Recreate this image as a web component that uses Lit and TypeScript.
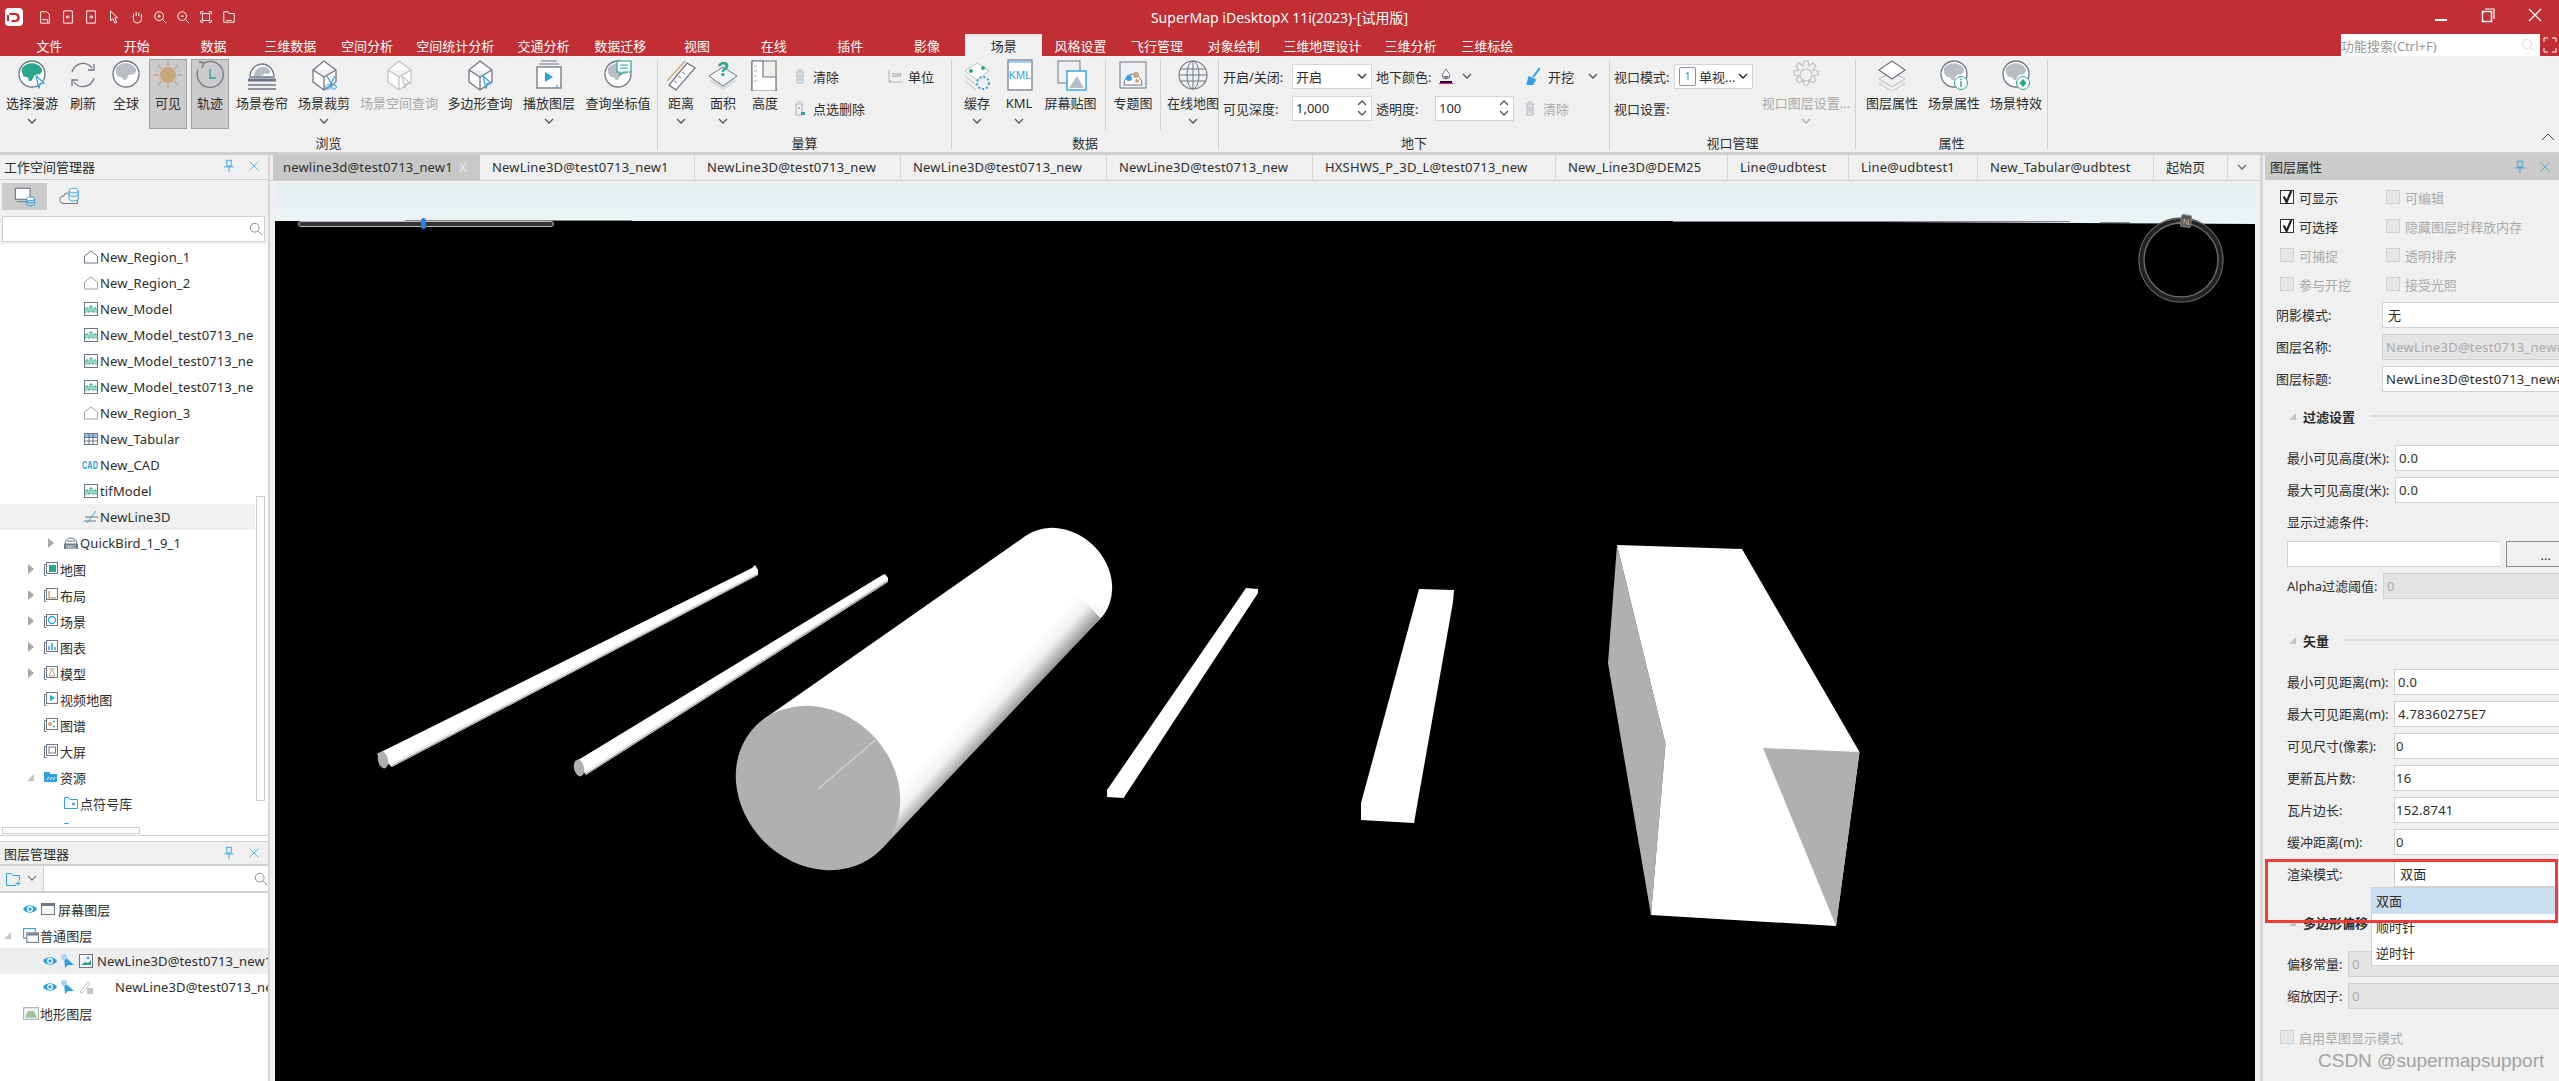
import { LitElement, css, html, svg } from "lit";
import { customElement } from "lit/decorators.js";

const SL = "#6d7787";
const TEAL = "#2aa58e";
const BLUE = "#2ea1e0";
const TAN = "#c9a77d";
const GR = "#b9bec6";

const ico = (body: unknown, s = 32, vb = 32) =>
  html`<svg width=${s} height=${s} viewBox="0 0 ${vb} ${vb}" fill="none">${body}</svg>`;

const globe = (c = GR, o = SL) => svg`
  <circle cx="16" cy="15" r="13" fill="#fff" stroke=${o} stroke-width="1.3"/>
  <path d="M6 9c4-5 11-6 16-3 4 2 5 6 3 8-2 3-6 0-7 3s-3 6-5 3c-1-3-5-1-6-4-1-2-2-5-1-7z" fill=${c}/>`;

const cursor = (x: number, y: number, c = BLUE) =>
  svg`<path d="M${x} ${y}l8 7-4 .5 -1 5z" fill="#fff" stroke=${c} stroke-width="1.2"/>`;

const cube = (c = SL) => svg`
  <path d="M16 2L28 11V23L16 31 5 23V11z M5 11L16 18 28 11 M16 18V31" stroke=${c} stroke-width="1.3" fill="#fff"/>`;

const I: Record<string, unknown> = {
  roam: ico(svg`${globe(TEAL)}<path d="M14 16v6" stroke=${TEAL} stroke-width="3"/>${cursor(20, 17)}`),
  refresh: ico(svg`
    <path d="M5 13C7 6 14 3 20 5c2 1 4 2 5 4" stroke=${SL} stroke-width="1.3"/>
    <path d="M27 5v6h-6" stroke=${SL} stroke-width="1.3"/>
    <path d="M27 19c-2 7-9 10-15 8-2-1-4-2-5-4" stroke=${SL} stroke-width="1.3"/>
    <path d="M5 27v-6h6" stroke=${SL} stroke-width="1.3"/>`),
  earth: ico(globe()),
  sun: ico(svg`<circle cx="16" cy="16" r="8" fill=${TAN}/>
    <path d="M16 2v5M16 25v5M2 16h5M25 16h5M6 6l3.5 3.5M22.5 22.5L26 26M26 6l-3.5 3.5M9.5 22.5L6 26" stroke=${TAN} stroke-width="1.6"/>`),
  track: ico(svg`<path d="M10 4A13 13 0 1 1 4 11" stroke=${SL} stroke-width="1.3"/><path d="M5 3l5 1-2 5" stroke=${SL} stroke-width="1.3"/>
    <path d="M16 10v9h6" stroke=${TEAL} stroke-width="1.4"/>`),
  curtain: ico(svg`<path d="M4 18a12 13 0 0 1 24 0z" fill="#fff" stroke=${SL} stroke-width="1.3"/>
    <path d="M8 17c0-6 5-10 11-9 4 1 6 4 5 6-2 2-4 0-6 1-1 2-3 2-5 2z" fill=${GR}/>
    <path d="M2 21h28" stroke=${SL} stroke-width="3"/><path d="M2 26h28M2 30h28" stroke=${SL} stroke-width="1.6"/>`),
  clip: ico(svg`${cube()}<path d="M19 17l5 9M27 17l-5 9" stroke=${BLUE} stroke-width="1.2"/><circle cx="20" cy="28" r="2.3" stroke=${BLUE}/><circle cx="26" cy="28" r="2.3" stroke=${BLUE}/>`),
  cubeq: ico(svg`${cube("#c4c4c4")}${cursor(19, 17, "#c4c4c4")}`),
  polyq: ico(svg`${cube()}${cursor(19, 17)}`),
  play: ico(svg`<path d="M8 2h16M6 5h20" stroke=${SL}/><rect x="4" y="8" width="24" height="21" stroke=${SL} stroke-width="1.3" fill="#fff"/>
    <path d="M12 13l8 5-8 5z" fill=${BLUE}/><path d="M24 26v3" stroke=${SL}/>`),
  coord: ico(svg`${globe()}<path d="M15 2h14v11h-8l-3 3v-3h-3z" fill="#fff" stroke=${TEAL} stroke-width="1.2"/><path d="M18 6h8M18 9h8" stroke=${TEAL}/>`),
  dist: ico(svg`<path d="M22 4l8 5L11 31l-7-5z" fill="#fff" stroke=${SL} stroke-width="1.3"/><path d="M2 22L20 2" stroke=${TAN} stroke-width="1.2"/><path d="M9 22l3 2M13 17l3 2M17 13l3 2" stroke=${SL}/>`),
  area: ico(svg`<path d="M16 12l14 10-14 9L2 22z" fill="#d8dbe0"/><path d="M2 17l14-9 14 9-14 10z" fill="#f4f4f4" stroke=${SL}/>
    <text x="16" y="17" text-anchor="middle" font-family="Liberation Sans" font-size="20" font-weight="700" fill=${TEAL}>?</text>`),
  height: ico(svg`<path d="M3 2h24v30M3 2v30h24" stroke=${SL} stroke-width="1.2"/>
    <path d="M3 2h11v16h13v14H3z" fill="#fff" stroke=${SL} stroke-width="1.2"/><path d="M5 7h3M5 12h3M5 17h3M5 22h3M27 4v26" stroke=${TAN}/>`),
  trash: ico(svg`<path d="M4 4h8M6 2h4M5 4v11h6V4M7 6v7M9 6v7" stroke="#aab0b8"/>`, 16, 16),
  trash2: ico(svg`<path d="M3 4h8M5 2h4M4 4v11h6V4" stroke="#aab0b8"/><circle cx="7" cy="8" r="1" fill=${TAN}/><rect x="9" y="12" width="4" height="3" fill=${TEAL}/>`, 16, 16),
  unit: ico(svg`<path d="M2 2v12h13M2 14l2-2" stroke="#aab0b8"/><text x="5" y="9" font-size="6" font-family="Liberation Sans" fill="#888">DM</text>`, 16, 16),
  cache: ico(svg`<path d="M4 12L16 4l12 8-12 9z" fill="#fff" stroke=${GR}/><path d="M4 17l11 9M4 22l11 9" stroke=${GR}/>
    <circle cx="10" cy="12" r="2" fill=${TEAL}/><circle cx="22" cy="9" r="2" fill=${TEAL}/><circle cx="22" cy="24" r="6" stroke=${BLUE} stroke-dasharray="2 2" stroke-width="2"/>`),
  kml: ico(svg`<rect x="5" y="1" width="24" height="30" fill="#fff" stroke=${SL} stroke-width="1.2"/><path d="M6 3h22" stroke=${BLUE}/>
    <text x="17" y="20" text-anchor="middle" font-family="Liberation Sans" font-size="11" fill=${BLUE}>KML</text>`),
  tex: ico(svg`<rect x="3" y="2" width="22" height="22" fill="#eef0f2" stroke=${SL}/><rect x="12" y="12" width="19" height="19" fill="#fff" stroke=${BLUE} stroke-width="1.4"/><path d="M14 29l8-12 7 12z" fill=${GR}/>`),
  theme: ico(svg`<rect x="3" y="3" width="26" height="26" fill="#eef0f2" stroke=${SL}/><path d="M7 26a9 11 0 1 1 18 0z" fill="#fff" stroke=${SL}/><circle cx="12" cy="19" r="3" fill=${BLUE}/><circle cx="19" cy="16" r="3" fill=${TAN}/><circle cx="20" cy="22" r="2" fill=${TAN}/>`),
  online: ico(svg`<circle cx="16" cy="16" r="14" stroke=${SL} stroke-width="1.1"/><ellipse cx="16" cy="16" rx="6" ry="14" stroke=${SL}/><path d="M16 2v28M3 10h26M3 22h26M2 16h28" stroke=${SL}/>`),
  fill: ico(svg`<path d="M8 1l4 6a4 4 0 1 1-8 0z" fill="#fff" stroke=${SL}/><path d="M5 8h6l-3 3z" fill=${SL}/><rect x="2" y="13" width="12" height="2" fill="#111"/><path d="M1 15.5h14" stroke="#f0c"/>`, 16, 16),
  dig: ico(svg`<path d="M14 1L8 9" stroke=${BLUE} stroke-width="1.6"/><path d="M2 16l2-8 7 3-3 5z" fill=${BLUE}/>`, 18, 16),
  gear: ico(svg`<circle cx="16" cy="16" r="6" stroke="#c0c0c0" stroke-width="1.2"/><path d="M14 2h4l1 5 4-3 3 3-3 4 5 1v4l-5 1 3 4-3 3-4-3-1 5h-4l-1-5-4 3-3-3 3-4-5-1v-4l5-1-3-4 3-3 4 3z" stroke="#c0c0c0" stroke-width="1.2"/>`),
  layers: ico(svg`<path d="M16 18L3 25l13 7 13-7z" stroke="#c4c8cf"/><path d="M16 13L3 20l13 8 13-8z" fill="#f0f0f0" stroke="#b2b7c0"/><path d="M16 2L3 11l13 9 13-9z" fill="#fff" stroke=${SL} stroke-width="1.2"/>`),
  ginfo: ico(svg`${globe()}<circle cx="23" cy="24" r="6.5" fill="#fff" stroke=${TEAL}/><path d="M23 22v6M23 19.5v1.5" stroke=${TEAL} stroke-width="1.4"/>`),
  gfx: ico(svg`${globe()}<circle cx="23" cy="24" r="6.5" fill="#fff" stroke=${TEAL}/><path d="M23 20l3.5 4-3.5 4-3.5-4z" fill=${TEAL}/>`),
  region: ico(svg`<path d="M1.5 14V7L8 2l6.5 5v7z" stroke=${SL}/>`, 16, 16),
  region2: ico(svg`<path d="M1.5 14V7L8 2l6.5 5v7z" stroke="#9aa1ac"/>`, 16, 16),
  model: ico(svg`<rect x="1.5" y="1.5" width="13" height="13" stroke=${SL}/><path d="M3 12V7h2v4h2V5h2v6h2V7h2v5" stroke=${TEAL}/>`, 16, 16),
  table: ico(svg`<rect x="1.5" y="2.5" width="13" height="11" stroke=${SL}/><path d="M2 3h12v3H2z" fill="#8dc2e8"/><path d="M2 6.5h12M2 10h12M6 3v10M10 3v10" stroke=${SL}/>`, 16, 16),
  line3d: ico(svg`<path d="M2 8h13M1 12h12" stroke=${SL}/><path d="M4 14L13 2" stroke=${BLUE}/>`, 16, 16),
  img: ico(svg`<path d="M2 9a6 6 0 0 1 12 0z" stroke=${SL}/><path d="M4 6h8" stroke=${SL}/><rect x="1" y="9" width="14" height="5" fill=${SL}/><text x="8" y="13.5" text-anchor="middle" font-size="5" font-family="Liberation Sans" fill="#fff">IMG</text>`, 16, 16),
  map: ico(svg`<path d="M3.5 14.5h-2v-11h2" stroke=${SL}/><rect x="3.5" y="1.5" width="11" height="11" stroke=${SL}/><rect x="6" y="4" width="7" height="7" fill=${TEAL}/>`, 16, 16),
  layout: ico(svg`<path d="M3.5 14.5h-2v-11h2" stroke=${SL}/><rect x="3.5" y="1.5" width="11" height="11" stroke=${SL}/><path d="M6 4v7h7" stroke=${TAN} stroke-width="1.5"/>`, 16, 16),
  scene: ico(svg`<path d="M3.5 14.5h-2v-11h2" stroke=${SL}/><rect x="3.5" y="1.5" width="11" height="11" stroke=${SL}/><circle cx="9" cy="7" r="3.5" stroke=${BLUE} stroke-width="1.3"/>`, 16, 16),
  chart: ico(svg`<path d="M3.5 14.5h-2v-11h2" stroke=${SL}/><rect x="3.5" y="1.5" width="11" height="11" stroke=${SL}/><path d="M6 11V7M9 11V4M12 11V8" stroke=${BLUE} stroke-width="1.5"/>`, 16, 16),
  mdl: ico(svg`<path d="M3.5 14.5h-2v-11h2" stroke=${SL}/><rect x="3.5" y="1.5" width="11" height="11" stroke=${SL}/><path d="M6 4h6M9 4l-3 7h6z" stroke=${TAN}/>`, 16, 16),
  video: ico(svg`<path d="M3.5 14.5h-2v-11h2" stroke=${SL}/><rect x="3.5" y="1.5" width="11" height="11" stroke=${SL}/><path d="M7 4l5 3-5 3z" fill=${BLUE}/>`, 16, 16),
  graph: ico(svg`<path d="M3.5 14.5h-2v-11h2" stroke=${SL}/><rect x="3.5" y="1.5" width="11" height="11" stroke=${SL}/><circle cx="7" cy="7" r="2" fill=${TAN}/><circle cx="11" cy="4.5" r="1" fill=${TEAL}/><circle cx="11" cy="9.5" r="1" fill=${TEAL}/>`, 16, 16),
  screen: ico(svg`<path d="M3.5 14.5h-2v-11h2" stroke=${SL}/><rect x="3.5" y="1.5" width="11" height="11" stroke=${SL}/><rect x="6" y="4" width="6.5" height="6" stroke=${SL}/>`, 16, 16),
  res: ico(svg`<path d="M1 13V3h5l1.5 2H14v8z" fill=${BLUE}/><path d="M4 11l2-3M7 11l2-3M10 11l2-3" stroke="#fff"/>`, 16, 16),
  sym: ico(svg`<path d="M1.5 13.5v-11h4l1.5 2h7.5v9z" stroke=${BLUE}/><circle cx="10.5" cy="9" r="1.5" fill=${BLUE}/>`, 16, 16),
  eye: ico(svg`<path d="M1 8c3-5 11-5 14 0-3 5-11 5-14 0z" fill=${BLUE}/><circle cx="8" cy="8" r="3" fill="#fff"/><circle cx="8" cy="8" r="1.7" fill=${BLUE}/>`, 16, 16),
  arrow: ico(svg`<path d="M4 3l10 9H8l-3 3z" fill=${BLUE}/><circle cx="4" cy="4" r="3" fill="#a6d5ef"/>`, 16, 16),
  scr: ico(svg`<rect x="1.5" y="2.5" width="13" height="11" fill="#f6f6f6" stroke=${SL}/><path d="M2 3h12v2H2z" fill=${SL}/>`, 16, 16),
  multi: ico(svg`<rect x="1.5" y="1.5" width="11" height="9" fill="#fff" stroke=${BLUE}/><rect x="4.5" y="5.5" width="11" height="9" fill="#fff" stroke=${SL}/><path d="M5 6h10v2H5z" fill=${SL}/>`, 17, 16),
  pic: ico(svg`<rect x="1.5" y="1.5" width="13" height="13" fill="#f4f4f4" stroke=${SL}/><circle cx="10" cy="5" r="1.3" fill=${BLUE}/><path d="M3 12l4-3 3 1 3-3v5z" fill=${TEAL}/>`, 16, 16),
  lock: ico(svg`<path d="M2 13L10 3l2 2-8 9z" stroke="#c4c4c4"/><rect x="9" y="9" width="6" height="6" fill="#c4c4c4"/>`, 16, 16),
  terrain: ico(svg`<rect x="1.5" y="2.5" width="14" height="11" fill="#f4f4f4" stroke="#aab0b8"/><path d="M3 12c2-7 4-7 5-6 2-2 4 0 6 6z" fill="#9fc59a"/>`, 17, 16),
  pin: ico(svg`<path d="M4.5 1.5h7M5.5 2v6h5V2M2.5 9h11M8 9v6" stroke=${BLUE}/>`, 14, 16),
  x: ico(svg`<path d="M2 2l12 12M14 2L2 14" stroke=${BLUE}/>`, 12, 16),
  search: ico(svg`<circle cx="6.5" cy="6.5" r="5" stroke="#7f7f7f"/><path d="M10 10l5 5" stroke="#7f7f7f"/>`, 14, 16),
  pc: ico(svg`<rect x="1.5" y="2.5" width="16" height="12" fill="#fff" stroke=${SL} stroke-width="1.2"/><path d="M3 17h12" stroke=${SL}/><ellipse cx="18" cy="14" rx="4.5" ry="2" fill="#fff" stroke=${BLUE}/><path d="M13.5 14v6c0 2 9 2 9 0v-6M13.5 17c0 2 9 2 9 0" stroke=${BLUE}/>`, 22, 24),
  cloud: ico(svg`<path d="M5 19a4 4 0 0 1 0-8c1-3 4-4 6-3M20 15v4H5" stroke=${SL} stroke-width="1.1"/><ellipse cx="16" cy="5" rx="5" ry="2.5" fill="#fff" stroke=${BLUE}/><path d="M11 5v9c0 3 10 3 10 0V5M11 9c0 3 10 3 10 0" stroke=${BLUE}/>`, 22, 24),
  addf: ico(svg`<path d="M11 14.5H1.5v-12h5l1.5 2h6.5v5" stroke=${BLUE}/><path d="M13 10v5M10.5 12.5h5" stroke=${BLUE}/>`, 16, 16),
};

const white = (d: string) => ico(svg`<path d=${d} stroke="#fff" stroke-width="1.1"/>`, 14, 16);
const QUICK = [
  "M3 2h7l3 3v10H3zM5 11h6v4",
  "M3 1h10v14H3zM10 8H6M8 6L6 8l2 2",
  "M3 1h10v14H3zM6 8h4M8 6l2 2-2 2",
  "M4 1v11l3-2 2 5 2-1-2-5h3z",
  "M4 8V4M7 7V2M10 7V3M13 8V5M4 8L3 7M4 7v4c0 5 9 5 9 0V5",
  "M7 2a5 5 0 1 0 0 10 5 5 0 0 0 0-10zM11 11l4 4M5 7h4M7 5v4",
  "M7 2a5 5 0 1 0 0 10 5 5 0 0 0 0-10zM11 11l4 4M5 7h4",
  "M2 5V2h3M11 2h3v3M14 11v3h-3M5 14H2v-3M4 4h8v8H4z",
  "M2 2h5l1 2h6v10H2zM5 12h6",
];

const TOP_TABS = ["开始", "数据", "三维数据", "空间分析", "空间统计分析", "交通分析", "数据迁移", "视图", "在线", "插件", "影像", "场景", "风格设置", "飞行管理", "对象绘制", "三维地理设计", "三维分析", "三维标绘"];

type Btn = { t: string; w: number; i: string; ml?: number; more?: boolean; on?: boolean; off?: boolean };
const chev = (c = "#555") => html`<svg width="10" height="7" viewBox="0 0 10 7" fill="none"><path d="M1 1l4 4 4-4" stroke=${c} stroke-width="1.3"/></svg>`;
const btn = (b: Btn) => html`
  <div class="btn ${b.on ? "on" : ""} ${b.off ? "off" : ""}" style="width:${b.w}px;margin-left:${b.ml ?? 0}px">
    <div class="bi">${I[b.i]}</div>
    <div class="bl">${b.t}</div>
    ${b.more ? html`<div class="bc">${chev(b.off ? "#aaa" : "#555")}</div>` : ""}
  </div>`;
const spin = html`<span class="spin"><svg width="10" height="18" viewBox="0 0 10 18" fill="none"><path d="M1 6l4-4 4 4M1 12l4 4 4-4" stroke="#555" stroke-width="1.3"/></svg></span>`;

const BROWSE: Btn[] = [
  { t: "选择漫游", w: 52, i: "roam", ml: 6, more: true },
  { t: "刷新", w: 50, i: "refresh" },
  { t: "全球", w: 36, i: "earth" },
  { t: "可见", w: 38, i: "sun", ml: 5, on: true },
  { t: "轨迹", w: 38, i: "track", ml: 4, on: true },
  { t: "场景卷帘", w: 66, i: "curtain" },
  { t: "场景裁剪", w: 58, i: "clip", more: true },
  { t: "场景空间查询", w: 92, i: "cubeq", off: true },
  { t: "多边形查询", w: 70, i: "polyq" },
  { t: "播放图层", w: 68, i: "play", more: true },
  { t: "查询坐标值", w: 70, i: "coord" },
];
const MEASURE: Btn[] = [
  { t: "距离", w: 44, i: "dist", ml: 1, more: true },
  { t: "面积", w: 40, i: "area", more: true },
  { t: "高度", w: 44, i: "height" },
];

type Row = { t: string; i: string; lv: number; tri?: "r" | "d"; hl?: boolean };
const TREE: Row[] = [
  { t: "New_Region_1", i: "region", lv: 3 },
  { t: "New_Region_2", i: "region2", lv: 3 },
  { t: "New_Model", i: "model", lv: 3 },
  { t: "New_Model_test0713_ne", i: "model", lv: 3 },
  { t: "New_Model_test0713_ne", i: "model", lv: 3 },
  { t: "New_Model_test0713_ne", i: "model", lv: 3 },
  { t: "New_Region_3", i: "region2", lv: 3 },
  { t: "New_Tabular", i: "table", lv: 3 },
  { t: "New_CAD", i: "cad", lv: 3 },
  { t: "tifModel", i: "model", lv: 3 },
  { t: "NewLine3D", i: "line3d", lv: 3, hl: true },
  { t: "QuickBird_1_9_1", i: "img", lv: 2, tri: "r" },
  { t: "地图", i: "map", lv: 1, tri: "r" },
  { t: "布局", i: "layout", lv: 1, tri: "r" },
  { t: "场景", i: "scene", lv: 1, tri: "r" },
  { t: "图表", i: "chart", lv: 1, tri: "r" },
  { t: "模型", i: "mdl", lv: 1, tri: "r" },
  { t: "视频地图", i: "video", lv: 1 },
  { t: "图谱", i: "graph", lv: 1 },
  { t: "大屏", i: "screen", lv: 1 },
  { t: "资源", i: "res", lv: 1, tri: "d" },
  { t: "点符号库", i: "sym", lv: 2 },
  { t: "线型符号库", i: "sym", lv: 2 },
];

const DOC_TABS = [
  ["NewLine3D@test0713_new1", 215],
  ["NewLine3D@test0713_new", 206],
  ["NewLine3D@test0713_new", 206],
  ["NewLine3D@test0713_new", 206],
  ["HXSHWS_P_3D_L@test0713_new", 243],
  ["New_Line3D@DEM25", 172],
  ["Line@udbtest", 121],
  ["Line@udbtest1", 129],
  ["New_Tabular@udbtest", 176],
  ["起始页", 74],
] as const;

const CHECKS = [
  ["可显示", true, "可编辑"],
  ["可选择", true, "隐藏图层时释放内存"],
  ["可捕捉", false, "透明排序"],
  ["参与开挖", false, "接受光照"],
] as const;

const check = (on: boolean, t: string) => html`
  <span class="chk ${on ? "ck" : ""}">
    <i>${on ? html`<svg width="13" height="13" viewBox="0 0 14 14" fill="none"><path d="M3 6l3 6 5-12" stroke="#222" stroke-width="2.4"/></svg>` : ""}</i>${t}
  </span>`;

const field = (label: string, val: string, left: number, base: number, off = false, pad = 3) => html`
  <div class="prow" style="padding-left:${base}px">
    <span class="pl" style="width:${left - base}px">${label}</span>
    <span class="fd ${off ? "dis" : ""}" style="padding-left:${pad}px">${val}</span>
  </div>`;

const head = (t: string, cls: string) => html`
  <div class="sect ${cls}"><span class="tri-d"></span><b>${t}</b><span class="rule"></span></div>`;

@customElement("app-root")
export class AppRoot extends LitElement {
  private row(r: Row) {
    return html`
      <div class="tr ${r.hl ? "hl" : ""}" style="padding-left:${r.lv * 20 + 3}px">
        <span class="slot">${r.tri === "r" ? html`<span class="tri-r"></span>` : r.tri === "d" ? html`<span class="tri-d"></span>` : ""}</span>
        <span class="ti">${r.i === "cad" ? html`<span class="cad">CAD</span>` : I[r.i]}</span>
        <span>${r.t}</span>
      </div>`;
  }

  private leftPanel() {
    return html`
      <aside class="left">
        <div class="ph"><span>工作空间管理器</span><span class="grow"></span>${I.pin}<span class="px">${I.x}</span></div>
        <div class="wtool"><span class="wb sel">${I.pc}</span><span class="wb">${I.cloud}</span></div>
        <div class="sbox">${I.search}</div>
        <div class="tree">
          ${TREE.map((r) => this.row(r))}
          <div class="vthumb"></div>
        </div>
        <div class="hbar"><div></div></div>
        <div class="ph lm"><span>图层管理器</span><span class="grow"></span>${I.pin}<span class="px">${I.x}</span></div>
        <div class="ltool">${I.addf}<span class="lc">${chev("#888")}</span><span class="linput">${I.search}</span></div>
        <div class="layers">
          <div class="lr" style="padding-left:22px">${I.eye}<span class="g2">${I.scr}</span><span class="g2">屏幕图层</span></div>
          <div class="lr" style="padding-left:4px"><span class="tri-d"></span><span class="g5">${I.multi}</span><span class="g1">普通图层</span></div>
          <div class="lr hl" style="padding-left:42px">${I.eye}<span class="g2">${I.arrow}</span><span class="g2">${I.pic}</span><span class="g3">NewLine3D@test0713_new1</span></div>
          <div class="lr" style="padding-left:42px">${I.eye}<span class="g2">${I.arrow}</span><span class="g2">${I.lock}</span><span class="g20">NewLine3D@test0713_new</span></div>
          <div class="lr" style="padding-left:22px"><span>${I.terrain}</span><span class="g1">地形图层</span></div>
        </div>
      </aside>`;
  }

  private scene() {
    return html`
      <svg class="scene" viewBox="275 183 1980 898" preserveAspectRatio="none">
        <defs>
          <linearGradient id="sky" x1="0" y1="0" x2="0" y2="1"><stop offset="0" stop-color="#e3eef1"/><stop offset="1" stop-color="#f0f7f8"/></linearGradient>
          <linearGradient id="cyl" gradientUnits="userSpaceOnUse" x1="860" y1="830" x2="884" y2="852"><stop offset="0" stop-color="#fff"/><stop offset=".5" stop-color="#f2f2f2"/><stop offset="1" stop-color="#9a9a9a"/></linearGradient>
        </defs>
        <rect x="275" y="183" width="1980" height="60" fill="url(#sky)"/>
        <polygon points="275,221 1670,221 2255,224 2255,1081 275,1081" fill="#000"/>
        <path d="M405 220.5H632M1673 221.5H2070M2100 222.5H2130" stroke="#888"/>
        <rect x="298.5" y="221.5" width="255" height="5" rx="2.5" fill="#333" stroke="#bbb"/>
        <rect x="421" y="218" width="5" height="11" rx="2.5" fill="#2a7fe0"/>
        <circle cx="2181" cy="260" r="42" stroke="#5c5c5c" stroke-width="1.5" fill="none"/>
        <circle cx="2181" cy="260" r="39.5" stroke="#222" stroke-width="3.5" fill="none"/>
        <circle cx="2181" cy="260" r="37" stroke="#6a6a6a" stroke-width="1.5" fill="none"/>
        <rect x="2181" y="215" width="10" height="12" rx="2" fill="#555" stroke="#888" transform="rotate(8 2186 221)"/>
        <text x="2186" y="225" text-anchor="middle" font-size="9" font-family="Liberation Sans" fill="#bbb">N</text>

        <polygon points="377,754 752,568 755,565 758,570 758,575 392,767" fill="#fff"/>
        <path d="M392 766L758 574.5" stroke="#a0a0a0" stroke-width="1.2"/>
        <path d="M390.5 764.5L757 573.5" stroke="#dcdcdc" stroke-width="1"/>
        <ellipse cx="383" cy="760" rx="5" ry="8.5" transform="rotate(-12 383 760)" fill="#b0b0b0"/>
        <polygon points="576.5,761 882.5,575 885,574 888,578 888,582 586,775" fill="#fff"/>
        <path d="M586 774L888 581" stroke="#a0a0a0" stroke-width="1.2"/>
        <path d="M584.5 772.5L887 580" stroke="#dcdcdc" stroke-width="1"/>
        <ellipse cx="579" cy="768" rx="5" ry="8.5" transform="rotate(-12 579 768)" fill="#b0b0b0"/>

        <ellipse cx="1060" cy="580" rx="56" ry="48" transform="rotate(45 1060 580)" fill="url(#cyl)"/>
        <polygon points="764,719 1025.5,536 1100.6,618.5 882,848.5" fill="url(#cyl)"/>
        <ellipse cx="818" cy="788" rx="88" ry="76" transform="rotate(45 818 788)" fill="#b0b0b0"/>
        <path d="M818 789L875.5 740" stroke="#e6e6e6"/>

        <polygon points="1246,588 1258,589 1258,593 1123.6,798 1107,797 1107,790" fill="#fff"/>
        <polygon points="1419,589 1454,590 1453,602 1414,823 1361,820 1361,803" fill="#fff"/>
        <polygon points="1617,545 1608,663 1651,915 1665.5,744" fill="#b0b0b0"/>
        <polygon points="1617,545 1742,549 1859.5,752 1836,926 1651,915 1665.5,744" fill="#fff"/>
        <polygon points="1763,748 1859.5,752 1836,926" fill="#b0b0b0"/>
      </svg>`;
  }

  private rightPanel() {
    return html`
      <aside class="right">
        <div class="ph act"><span>图层属性</span><span class="grow"></span>${I.pin}<span class="px">${I.x}</span></div>
        <div class="checks">
          ${CHECKS.map(([a, on, b]) => html`<div class="crow"><span class="c1">${check(on, a)}</span>${check(false, b)}</div>`)}
        </div>
        ${field("阴影模式:", "无", 117, 11, false, 5)}
        ${field("图层名称:", "NewLine3D@test0713_new#", 117, 11, true)}
        ${field("图层标题:", "NewLine3D@test0713_new#", 117, 11)}
        ${head("过滤设置", "s1")}
        ${field("最小可见高度(米):", "0.0", 130, 22)}
        ${field("最大可见高度(米):", "0.0", 130, 22)}
        <div class="prow" style="padding-left:22px"><span class="pl">显示过滤条件:</span></div>
        <div class="prow" style="padding-left:22px"><span class="fd f213"></span><span class="dots">...</span></div>
        ${field("Alpha过滤阈值:", "0", 118, 22, true)}
        ${head("矢量", "s2")}
        ${field("最小可见距离(m):", "0.0", 129, 22)}
        ${field("最大可见距离(m):", "4.78360275E7", 129, 22)}
        ${field("可见尺寸(像素):", "0", 129, 22, false, 1)}
        ${field("更新瓦片数:", "16", 129, 22, false, 1)}
        ${field("瓦片边长:", "152.8741", 129, 22, false, 1)}
        ${field("缓冲距离(m):", "0", 129, 22, false, 1)}
        ${field("渲染模式:", "双面", 129, 22, false, 5)}
        ${head("多边形偏移", "s3")}
        ${field("偏移常量:", "0", 83, 22, true)}
        ${field("缩放因子:", "0", 83, 22, true)}
        <div class="sk">${check(false, "启用草图显示模式")}</div>
        <div class="menu"><div class="sel">双面</div><div>顺时针</div><div>逆时针</div></div>
        <div class="redbox"></div>
        <div class="mark">CSDN @supermapsupport</div>
      </aside>`;
  }

  private ribbon() {
    return html`
      <section class="ribbon">
        <div class="group" style="width:658px">
          <div class="gb">${BROWSE.map(btn)}</div><div class="gl">浏览</div>
        </div>
        <div class="group" style="width:294px">
          <div class="gb">
            ${MEASURE.map(btn)}
            <div class="scol" style="width:95px;margin-left:5px">
              <div class="sr">${I.trash}<span>清除</span></div>
              <div class="sr">${I.trash2}<span>点选删除</span></div>
            </div>
            <div class="scol" style="width:57px"><div class="sr">${I.unit}<span>单位</span></div></div>
          </div>
          <div class="gl">量算</div>
        </div>
        <div class="group" style="width:267px">
          <div class="gb">
            ${btn({ t: "缓存", w: 46, i: "cache", ml: 2, more: true })}
            ${btn({ t: "KML", w: 38, i: "kml", more: true })}
            ${btn({ t: "屏幕贴图", w: 65, i: "tex" })}
            <span class="vs"></span>
            ${btn({ t: "专题图", w: 50, i: "theme" })}
            <span class="vs"></span>
            ${btn({ t: "在线地图", w: 60, i: "online", more: true })}
          </div>
          <div class="gl">数据</div>
        </div>
        <div class="group" style="width:391px">
          <div class="gb col ug">
            <div class="ur">
              <span class="ul" style="width:69px">开启/关闭:</span>
              <span class="ctl" style="width:80px">开启<span class="grow"></span>${chev("#333")}</span>
              <span class="ul" style="width:56px;margin-left:4px">地下颜色:</span>
              <span class="clr">${I.fill}<span class="cm">${chev()}</span></span>
              <span class="sr nar">${I.dig}<span>开挖</span><span class="cm">${chev()}</span></span>
            </div>
            <div class="ur">
              <span class="ul" style="width:69px">可见深度:</span>
              <span class="ctl" style="width:80px">1,000<span class="grow"></span>${spin}</span>
              <span class="ul" style="width:59px;margin-left:4px">透明度:</span>
              <span class="ctl" style="width:79px">100<span class="grow"></span>${spin}</span>
              <span class="sr off" style="margin-left:8px">${I.trash}<span>清除</span></span>
            </div>
          </div>
          <div class="gl">地下</div>
        </div>
        <div class="group" style="width:246px">
          <div class="gb">
            <div class="col ug" style="width:145px">
              <div class="ur">
                <span class="ul" style="width:60px">视口模式:</span>
                <span class="ctl tight" style="width:79px"><span class="one">1</span>单视...<span class="grow"></span>${chev("#222")}</span>
              </div>
              <div class="ur"><span class="ul">视口设置:</span></div>
            </div>
            ${btn({ t: "视口图层设置...", w: 98, i: "gear", off: true, more: true })}
          </div>
          <div class="gl">视口管理</div>
        </div>
        <div class="group" style="width:192px">
          <div class="gb" style="padding-left:5px">
            ${btn({ t: "图层属性", w: 62, i: "layers" })}
            ${btn({ t: "场景属性", w: 62, i: "ginfo" })}
            ${btn({ t: "场景特效", w: 62, i: "gfx" })}
          </div>
          <div class="gl">属性</div>
        </div>
        <span class="grow"></span>
        <span class="collapse"><svg width="14" height="8" viewBox="0 0 14 8" fill="none"><path d="M1 7l6-6 6 6" stroke="#444"/></svg></span>
      </section>`;
  }

  render() {
    return html`
      <header class="title">
        <div class="t1">
          <div class="quick">
            <svg class="logo" width="18" height="18" viewBox="0 0 18 18"><rect width="18" height="18" rx="4" fill="#fff"/><path d="M4 5h7c5 0 5 9 0 9H6l1-2h3c3 0 3-5 0-5H5z" fill="#d0282e"/><rect x="2" y="7" width="2" height="6" fill="#d0282e"/></svg>
            ${QUICK.map((d) => html`<span class="qi">${white(d)}</span>`)}
          </div>
          <div class="caption">SuperMap iDesktopX 11i(2023)-[试用版]</div>
          <div class="win">
            <svg width="14" height="14" viewBox="0 0 14 14" fill="none"><path d="M1 12h12" stroke="#fff" stroke-width="2"/></svg>
            <svg width="16" height="16" viewBox="0 0 16 16" fill="none"><rect x="2.5" y="4.5" width="9" height="10" stroke="#fff" stroke-width="1.5"/><path d="M5 2h9v10" stroke="#fff" stroke-width="1.2"/></svg>
            <svg width="14" height="14" viewBox="0 0 14 14" fill="none"><path d="M1 1l12 12M13 1L1 13" stroke="#fff" stroke-width="1.3"/></svg>
          </div>
        </div>
        <div class="t2">
          <span class="tab first">文件</span>
          ${TOP_TABS.map((t) => html`<span class="tab ${t === "场景" ? "act" : ""}">${t}</span>`)}
          <span class="grow"></span>
          <span class="find">功能搜索(Ctrl+F)<span class="grow"></span>
            <svg width="14" height="14" viewBox="0 0 14 14" fill="none"><circle cx="6" cy="6" r="4.5" stroke="#ddd"/><path d="M9 9l4 4" stroke="#ddd"/></svg>
          </span>
          <span class="full"><svg width="14" height="16" viewBox="0 0 14 16" fill="none"><path d="M1 5V1h4M9 1h4v4M13 11v4H9M5 15H1v-4" stroke="#fff"/></svg></span>
        </div>
      </header>
      ${this.ribbon()}
      <main class="main">
        ${this.leftPanel()}
        <section class="center">
          <div class="dtabs">
            <span class="dt cur">newline3d@test0713_new1<em>X</em></span>
            ${DOC_TABS.map(([t, w]) => html`<span class="dt" style="width:${w}px">${t}</span>`)}
            <span class="dmore">${chev("#666")}</span>
          </div>
          ${this.scene()}
        </section>
        ${this.rightPanel()}
      </main>`;
  }

  static styles = css`
    :host {
      display: block;
      width: 2559px;
      height: 1081px;
      overflow: hidden;
      background: #f0f0f0;
      color: #2d2d2d;
      font-family: "Noto Sans", "Noto Sans CJK SC", sans-serif;
      font-size: 13px;
    }
    svg { display: block; flex: none; }
    .grow { flex: 1; }

    .title { height: 56px; background: #c12e33; color: #fff; }
    .t1 { height: 34px; display: grid; grid-template-columns: 1fr auto 1fr; align-items: center; }
    .quick { display: flex; align-items: center; padding-left: 5px; }
    .logo { margin-right: 10px; }
    .qi { width: 23px; display: flex; justify-content: center; }
    .caption { font-size: 14px; margin-bottom: 1px; }
    .win { display: flex; align-items: center; justify-content: flex-end; gap: 32px; padding: 0 17px 4px 0; }
    .t2 { height: 22px; display: flex; }
    .tab { min-width: 76.7px; padding: 0 11px; box-sizing: border-box; text-align: center; line-height: 24px; white-space: nowrap; }
    .tab.first { width: 98.5px; }
    .tab.act { background: #f0f0f0; color: #2d2d2d; border-top: 2px solid #e6e6e6; line-height: 20px; }
    .find { width: 199px; background: #fff; color: #999; display: flex; align-items: center; padding-right: 5px; box-sizing: border-box; }
    .full { width: 19px; display: flex; align-items: center; justify-content: center; }

    .ribbon { height: 99px; box-sizing: border-box; display: flex; border-bottom: 3px solid #cfcfcf; background: #f0f0f0; }
    .group { flex: none; box-sizing: border-box; margin: 4px 0 2px; border-right: 1px solid #cfcfcf; display: flex; flex-direction: column; }
    .gb { height: 74px; display: flex; }
    .gb.col, .col { flex-direction: column; display: flex; }
    .gl { height: 16px; line-height: 18px; text-align: center; }
    .btn { flex: none; height: 74px; display: flex; flex-direction: column; align-items: center; box-sizing: border-box; white-space: nowrap; }
    .btn.on { height: 70px; margin-top: -1px; background: #cbcbcb; border: 1px solid #a3a3a3; }
    .btn.off { color: #aaa; }
    .bi { height: 30px; display: flex; align-items: center; }
    .bl { height: 26px; line-height: 26px; }
    .bc { height: 10px; display: flex; align-items: center; }
    .vs { width: 1px; height: 70px; background: #cfcfcf; margin: 0 2px; flex: none; }
    .scol { display: flex; flex-direction: column; flex: none; }
    .sr { height: 32px; display: flex; align-items: center; gap: 5px; white-space: nowrap; }
    .sr.off { color: #aaa; }
    .ug { padding-left: 4px; }
    .ur { height: 32px; display: flex; align-items: center; white-space: nowrap; }
    .ul { display: block; flex: none; }
    .ctl { flex: none; height: 25px; box-sizing: border-box; background: #fff; border: 1px solid #d4d4d4; display: flex; align-items: center; padding: 0 4px 0 3px; }
    .ctl.tight { padding-left: 4px; }
    .one { width: 17px; height: 19px; border: 1px solid #8894a5; box-sizing: border-box; border-radius: 2px; color: #4a7ab0; font-size: 10px; text-align: center; line-height: 17px; margin-right: 3px; }
    .clr { width: 92px; display: flex; align-items: center; padding-left: 6px; box-sizing: border-box; }
    .cm { margin-left: 8px; }
    .sr.nar { gap: 6px; }
    .spin { display: block; }
    .collapse { align-self: flex-end; padding: 0 4px 11px 0; }

    .main { height: 926px; display: flex; }
    .left { width: 270px; flex: none; box-sizing: border-box; border-right: 2px solid #d6d6d6; background: #fff; display: flex; flex-direction: column; position: relative; }
    .ph { height: 25px; box-sizing: border-box; flex: none; display: flex; align-items: center; background: #f0f0f0; border-bottom: 1px solid #d0d0d0; padding: 0 8px 2px 4px; }
    .ph.lm { margin-top: 5px; height: 25px; border-top: 1px solid #d0d0d0; border-bottom: 2px solid #d0d0d0; padding-bottom: 0; }
    .px { margin-left: 12px; }
    .wtool { height: 33px; background: #f0f0f0; display: flex; padding: 3px 0 3px 2px; box-sizing: border-box; flex: none; }
    .wb { width: 45px; display: flex; align-items: center; justify-content: center; }
    .wb.sel { background: #cbcbcb; }
    .sbox { height: 31px; flex: none; background: #f0f0f0; padding: 3px 3px 2px 2px; box-sizing: border-box; display: flex; justify-content: flex-end; align-items: center; position: relative; }
    .sbox::before { content: ""; position: absolute; left: 2px; right: 3px; top: 3px; height: 26px; background: #fff; border: 1px solid #d0d0d0; box-sizing: border-box; }
    .sbox svg { position: relative; margin-right: 2px; }
    .tree { height: 580px; overflow: hidden; flex: none; position: relative; letter-spacing: 0.12px; }
    .tr { height: 26px; display: flex; align-items: center; white-space: nowrap; width: 255px; box-sizing: border-box; }
    .tr.hl { background: #f0f0f0; }
    .slot { width: 20px; flex: none; display: flex; align-items: center; justify-content: center; padding-right: 5px; box-sizing: border-box; }
    .ti { width: 17px; flex: none; display: flex; align-items: center; }
    .cad { color: #2ea1e0; font-family: "Liberation Sans", sans-serif; font-weight: 700; font-size: 11px; transform: scaleX(0.66); transform-origin: left center; margin-left: -1px; }
    .tri-r { display: block; width: 0; height: 0; border: 5px solid transparent; border-left: 6px solid #a8a8a8; border-right: 0; }
    .tri-d { display: block; flex: none; width: 0; height: 0; border-style: solid; border-width: 0 0 7px 7px; border-color: transparent transparent #c4c4c4 transparent; }
    .vthumb { position: absolute; right: 3px; top: 252px; width: 7px; height: 303px; border: 1px solid #d0d0d0; background: #fff; }
    .hbar { height: 12px; flex: none; background: #fff; padding: 3px 0 0 2px; box-sizing: border-box; border-bottom: 1px solid #d0d0d0; }
    .hbar div { width: 138px; height: 7px; border: 1px solid #d0d0d0; box-sizing: border-box; }
    .ltool { height: 27px; flex: none; display: flex; align-items: center; background: #f0f0f0; border-bottom: 2px solid #d0d0d0; padding-left: 5px; box-sizing: border-box; }
    .lc { margin-left: 6px; }
    .linput { flex: 1; align-self: stretch; margin-left: 6px; background: #fff; border-left: 1px solid #d0d0d0; display: flex; align-items: center; justify-content: flex-end; }
    .layers { flex: 1; background: #fff; overflow: hidden; padding-top: 3px; letter-spacing: 0.12px; }
    .lr { height: 26px; display: flex; align-items: center; white-space: nowrap; box-sizing: border-box; }
    .lr.hl { background: #eee; }
    .g1 { margin-left: 1px; }
    .g2 { margin-left: 2px; }
    .g3 { margin-left: 3px; }
    .g5 { margin-left: 11px; }
    .g20 { margin-left: 21px; }

    .center { flex: 1; min-width: 0; display: flex; flex-direction: column; }
    .dtabs { height: 25px; flex: none; display: flex; align-items: stretch; padding-left: 3px; border-bottom: 1px solid #d0d0d0; letter-spacing: 0.18px; }
    .dt { box-sizing: border-box; padding-left: 12px; border-right: 1px solid #d6d6d6; line-height: 24px; white-space: nowrap; flex: none; overflow: hidden; }
    .dt.cur { width: 207px; background: #c8c8c8; border: 0; padding-left: 10px; }
    .dt em { font-style: normal; color: #eee; margin-left: 6px; }
    .dmore { width: 28px; display: flex; align-items: center; justify-content: center; }
    .scene { margin: 2px 5px 0; width: 1980px; height: 898px; }

    .right { width: 299px; flex: none; box-sizing: border-box; border-left: 3px solid #d6d6d6; padding-left: 2px; position: relative; overflow: hidden; background: #f0f0f0; }
    .ph.act { background: #cbcbcb; border: 0; padding: 0 8px 2px 5px; }
    .checks { padding-top: 2.5px; height: 122px; box-sizing: border-box; }
    .crow { height: 29px; display: flex; align-items: center; padding-left: 15px; }
    .c1 { width: 106px; }
    .chk { display: flex; align-items: center; color: #aaa; white-space: nowrap; }
    .chk.ck { color: #2d2d2d; }
    .chk i { width: 14px; height: 14px; box-sizing: border-box; border: 1px solid #d0d0d0; background: #e6e6e6; margin-right: 5px; flex: none; }
    .chk.ck i { border: 1px solid #333; background: #fff; }
    .prow { height: 32px; display: flex; align-items: flex-start; white-space: nowrap; box-sizing: border-box; }
    .pl { height: 26px; line-height: 26px; flex: none; }
    .fd { flex: 1; min-width: 0; height: 26px; line-height: 24px; box-sizing: border-box; border: 1px solid #d0d0d0; border-right: 0; background: #fff; overflow: hidden; letter-spacing: 0.25px; }
    .fd.dis { background: #e4e4e4; color: #aaa; }
    .f213 { flex: none; width: 213px; }
    .dots { flex: 1; height: 26px; margin-left: 6px; box-sizing: border-box; border: 1px solid #8a8a8a; border-right: 0; line-height: 26px; text-align: right; padding-right: 8px; background: #f0f0f0; }
    .sect { height: 36px; display: flex; align-items: center; padding-left: 24px; }
    .sect b { margin-left: 7px; white-space: nowrap; font-weight: 700; }
    .rule { flex: 1; height: 2px; background: #ddd; margin-left: 16px; }
    .s1 { margin: 0 0 11px; }
    .s2 { margin: 17px 0 11px; }
    .s3 { margin: 11px 0 11px; }
    .sk { margin-top: 8px; padding-left: 15px; height: 28px; display: flex; align-items: center; }
    .menu { position: absolute; left: 108px; top: 732px; width: 190px; height: 79px; background: #fff; border: 1px solid #d0d0d0; box-sizing: border-box; }
    .menu div { height: 26px; line-height: 26px; padding-left: 4px; }
    .menu .sel { background: #c9def0; }
    .redbox { position: absolute; left: 2px; top: 704px; width: 293px; height: 64px; border: 3px solid #f53a3a; box-sizing: border-box; }
    .mark { position: absolute; left: 55px; top: 895px; font-family: "Liberation Sans", sans-serif; font-size: 19px; color: #a2a2a2; white-space: nowrap; }
  `;
}

declare global {
  interface HTMLElementTagNameMap {
    "app-root": AppRoot;
  }
}
